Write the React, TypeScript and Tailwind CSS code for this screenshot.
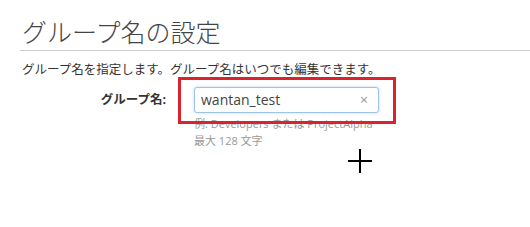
export default function App() {
  return (
    <div
      className="relative h-[227px] w-[530px] overflow-hidden bg-white pl-5 pt-[15px]"
      style={{ fontFamily: '"Open Sans", "Noto Sans CJK JP", sans-serif' }}
    >
      <h1 className="h-[36px] border-b border-[#cccccc] pl-[2px] text-[25px] font-light leading-[34px] text-[#444444]">
        グループ名の設定
      </h1>

      <p className="mt-[10px] pl-[2px] text-[12.5px] leading-[18px] text-[#333333]">
        グループ名を指定します。グループ名はいつでも編集できます。
      </p>

      <div className="mt-[8px] flex items-start">
        <label className="w-[146px] pt-[4px] text-right text-[12.5px] font-bold leading-[18px] text-[#333333]">
          グループ名:
        </label>

        <div className="relative ml-[28px]">
          <div className="flex h-[26px] w-[185px] items-center justify-between rounded-[3px] border border-[#9ec3e6] bg-white pl-[6px] pr-[10px] shadow-[0_0_3px_rgba(102,163,224,0.45)]">
            <span className="text-[14px] leading-none text-[#444444]">wantan_test</span>
            <span className="text-[14px] leading-none text-[#999999]">×</span>
          </div>

          <div className="mt-[2px] text-[11px] leading-[17px] text-[#999999]">
            <p>例: Developers または ProjectAlpha</p>
            <p>最大 128 文字</p>
          </div>

          <div className="absolute left-[-16px] top-[-10px] h-[47px] w-[218px] border-[3px] border-[#d9232e]" />
        </div>
      </div>

      <svg
        className="absolute left-[347px] top-[148px]"
        width="26"
        height="26"
        viewBox="0 0 26 26"
      >
        <path d="M13 1v24M1 13h24" stroke="#000" strokeWidth="2" />
      </svg>
    </div>
  )
}
